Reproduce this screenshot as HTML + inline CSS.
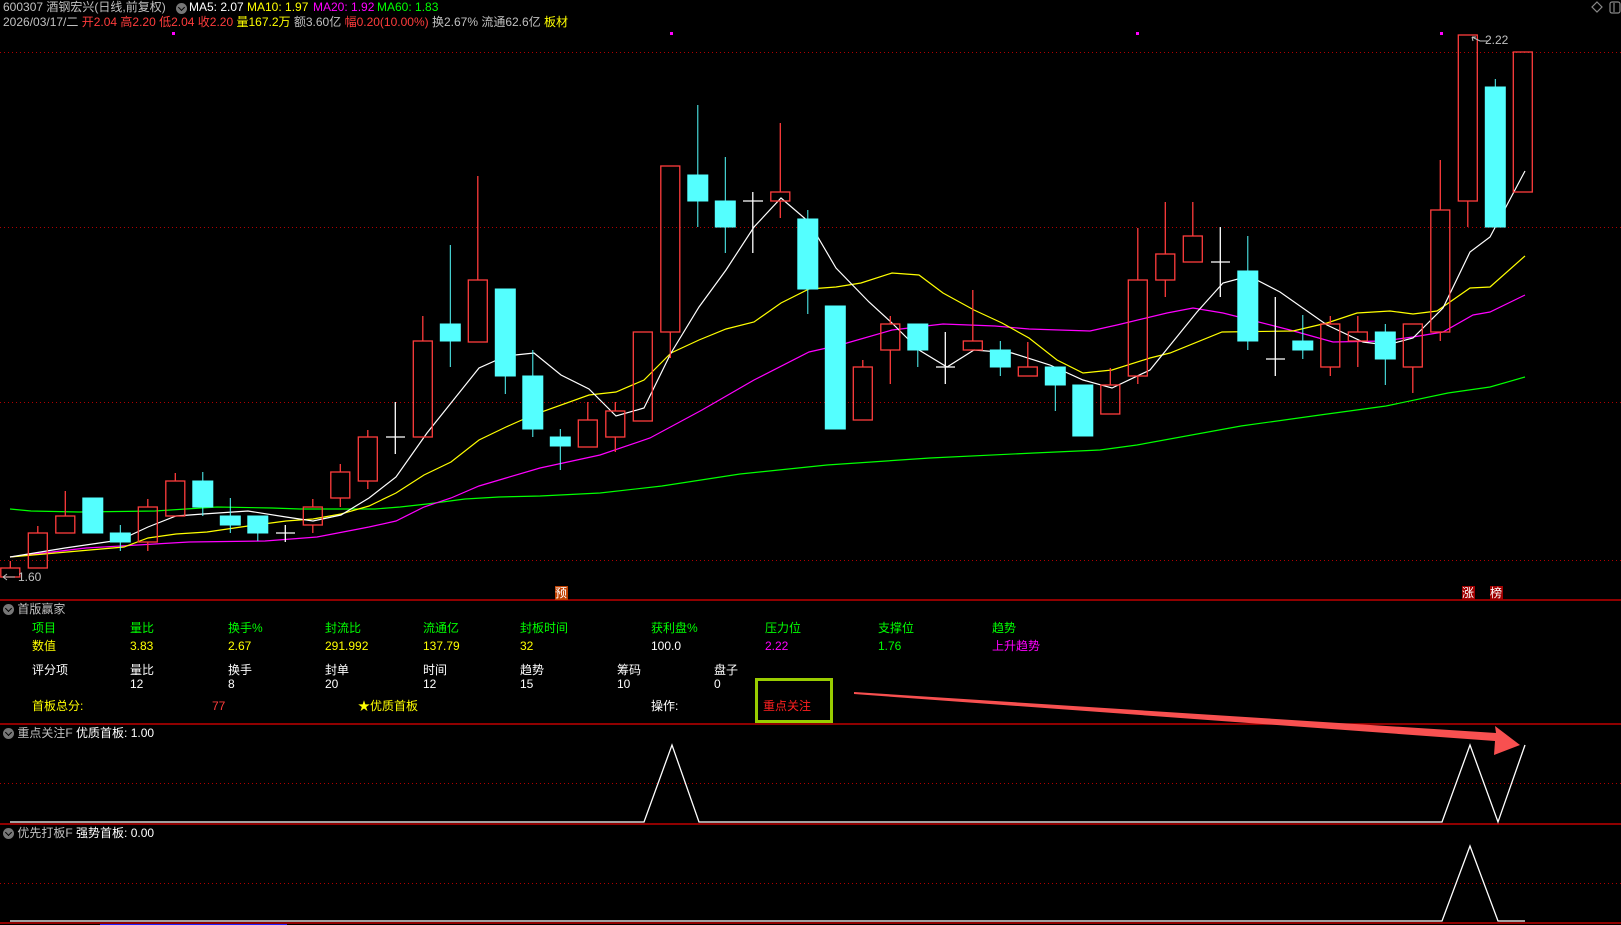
<!DOCTYPE html>
<html><head><meta charset="utf-8">
<style>
html,body{margin:0;padding:0;background:#000;width:1621px;height:925px;overflow:hidden}
body{position:relative;font-family:"Liberation Sans","Noto Sans CJK SC",sans-serif;font-size:12px;color:#c0c0c0}
.t{position:absolute;white-space:nowrap;line-height:14px}
svg{position:absolute;left:0;top:0}
.g{color:#00ff00}.y{color:#ffff00}.m{color:#ff00ff}.r{color:#ff3c3c}.w{color:#fff}.s{color:#c0c0c0}
.ic{display:inline-block;width:11px;height:11px;border-radius:50%;background:#777;vertical-align:-2px;position:relative}
.ic:after{content:"";position:absolute;left:3px;top:2px;width:4px;height:4px;border-right:1.5px solid #000;border-bottom:1.5px solid #000;transform:rotate(45deg)}
</style></head><body>
<svg width="1621" height="925" viewBox="0 0 1621 925">
<g stroke="#b00000" stroke-width="1" stroke-dasharray="1 3" fill="none">
<line x1="0" y1="52.5" x2="1621" y2="52.5"/><line x1="0" y1="227.5" x2="1621" y2="227.5"/>
<line x1="0" y1="402.5" x2="1621" y2="402.5"/><line x1="0" y1="560.5" x2="1621" y2="560.5"/>
<line x1="0" y1="783.5" x2="1621" y2="783.5"/><line x1="0" y1="883.5" x2="1621" y2="883.5"/>
</g>
<g stroke="#c00000" stroke-width="1.5">
<line x1="0" y1="600" x2="1621" y2="600"/><line x1="0" y1="724" x2="1621" y2="724"/>
<line x1="0" y1="824" x2="1621" y2="824"/><line x1="0" y1="923" x2="1621" y2="923"/>
</g>
<line x1="100" y1="924.5" x2="287" y2="924.5" stroke="#2020ff" stroke-width="1"/>
<!-- MAs -->
<g fill="none" stroke-width="1.2">
<polyline stroke="#00ff00" points="10,509 31,511 79,512 155,511 217,507 272,508 300,509 375,509 400,507 427,504 465,499 499,497 540,496 600,493 662,486 740,474 827,465 930,458 1034,453 1100,450 1137,445 1241,426 1320,415 1386,406 1448,393 1490,387 1525,377"/>
<polyline stroke="#ff00ff" points="10,557 86,548 189,542 265,541 317,537 369,527 396,521 424,507 451,498 479,486 506,478 540,468 600,455 650,438 702,410 754,380 809,352 840,345 892,330 943,324 995,326 1029,329 1090,331 1117,325 1167,313 1193,308 1223,313 1290,330 1333,342 1383,341 1413,337 1443,332 1473,315 1490,312 1525,295"/>
<polyline stroke="#ffff00" points="10,557 124,547 148,538 176,534 207,532 248,526 286,521 313,519 341,514 369,506 396,493 424,475 451,462 479,440 506,427 533,415 589,395 616,392 644,380 671,353 699,340 726,329 754,322 781,303 809,289 836,287 861,283 892,273 919,275 943,293 974,310 1002,323 1029,338 1057,360 1083,373 1112,370 1150,358 1170,353 1222,332 1293,331 1327,323 1357,313 1390,311 1413,314 1437,311 1470,288 1490,287 1525,256"/>
<polyline stroke="#ffffff" points="10,557 65,548 120,540 148,527 176,516 203,514 248,511 286,517 313,521 341,515 369,498 396,477 427,433 451,403 479,368 506,356 534,353 561,375 589,389 616,416 644,408 671,353 699,307 726,270 754,227 781,198 809,222 836,268 869,302 892,323 919,350 947,367 974,350 1012,353 1050,365 1083,380 1112,388 1150,370 1197,312 1223,283 1249,276 1280,292 1327,325 1363,342 1387,345 1413,338 1443,308 1470,252 1490,237 1525,171"/>
</g>
<g id="candles" stroke-width="1.3">
<!-- generated static -->
<g stroke="#ff3c3c" fill="none">
<line x1="10.3" y1="561" x2="10.3" y2="568"/><rect x="0.8" y="568" width="19" height="9"/>
<line x1="37.8" y1="526" x2="37.8" y2="533"/><rect x="28.3" y="533" width="19" height="35"/>
<line x1="65.3" y1="491" x2="65.3" y2="516"/><rect x="55.8" y="516" width="19" height="17"/>
<line x1="147.8" y1="499" x2="147.8" y2="507"/><line x1="147.8" y1="542" x2="147.8" y2="551"/><rect x="138.3" y="507" width="19" height="35"/>
<line x1="175.3" y1="473" x2="175.3" y2="481"/><rect x="165.8" y="481" width="19" height="35"/>
<line x1="312.8" y1="499" x2="312.8" y2="507"/><line x1="312.8" y1="525" x2="312.8" y2="533"/><rect x="303.3" y="507" width="19" height="18"/>
<line x1="340.3" y1="464" x2="340.3" y2="472"/><line x1="340.3" y1="498" x2="340.3" y2="507"/><rect x="330.8" y="472" width="19" height="26"/>
<line x1="367.8" y1="430" x2="367.8" y2="437"/><line x1="367.8" y1="481" x2="367.8" y2="489"/><rect x="358.3" y="437" width="19" height="44"/>
<line x1="422.8" y1="316" x2="422.8" y2="341"/><rect x="413.3" y="341" width="19" height="96"/>
<line x1="477.8" y1="176" x2="477.8" y2="280"/><rect x="468.3" y="280" width="19" height="62"/>
<line x1="587.8" y1="402" x2="587.8" y2="420"/><rect x="578.3" y="420" width="19" height="27"/>
<line x1="615.3" y1="402" x2="615.3" y2="411"/><line x1="615.3" y1="437" x2="615.3" y2="452"/><rect x="605.8" y="411" width="19" height="26"/>
<rect x="633.3" y="332" width="19" height="89"/>
<line x1="670.3" y1="332" x2="670.3" y2="358"/><rect x="660.8" y="166" width="19" height="166"/>
<line x1="780.3" y1="123" x2="780.3" y2="192"/><line x1="780.3" y1="201" x2="780.3" y2="218"/><rect x="770.8" y="192" width="19" height="9"/>
<line x1="862.8" y1="360" x2="862.8" y2="367"/><rect x="853.3" y="367" width="19" height="53"/>
<line x1="890.3" y1="316" x2="890.3" y2="324"/><line x1="890.3" y1="350" x2="890.3" y2="384"/><rect x="880.8" y="324" width="19" height="26"/>
<line x1="972.8" y1="290" x2="972.8" y2="341"/><rect x="963.3" y="341" width="19" height="9"/>
<line x1="1027.8" y1="342" x2="1027.8" y2="367"/><rect x="1018.3" y="367" width="19" height="9"/>
<line x1="1110.3" y1="368" x2="1110.3" y2="385"/><rect x="1100.8" y="385" width="19" height="29"/>
<line x1="1137.8" y1="228" x2="1137.8" y2="280"/><line x1="1137.8" y1="376" x2="1137.8" y2="384"/><rect x="1128.3" y="280" width="19" height="96"/>
<line x1="1165.3" y1="202" x2="1165.3" y2="254"/><line x1="1165.3" y1="280" x2="1165.3" y2="297"/><rect x="1155.8" y="254" width="19" height="26"/>
<line x1="1192.8" y1="202" x2="1192.8" y2="236"/><rect x="1183.3" y="236" width="19" height="26"/>
<line x1="1330.3" y1="316" x2="1330.3" y2="324"/><line x1="1330.3" y1="367" x2="1330.3" y2="376"/><rect x="1320.8" y="324" width="19" height="43"/>
<line x1="1357.8" y1="316" x2="1357.8" y2="332"/><line x1="1357.8" y1="341" x2="1357.8" y2="367"/><rect x="1348.3" y="332" width="19" height="9"/>
<line x1="1412.8" y1="367" x2="1412.8" y2="393"/><rect x="1403.3" y="324" width="19" height="43"/>
<line x1="1440.3" y1="160" x2="1440.3" y2="210"/><line x1="1440.3" y1="332" x2="1440.3" y2="341"/><rect x="1430.8" y="210" width="19" height="122"/>
<line x1="1467.8" y1="201" x2="1467.8" y2="227"/><rect x="1458.3" y="35" width="19" height="166"/>
<rect x="1513.3" y="52" width="19" height="140"/>
</g>
<g stroke="#54ffff" fill="#54ffff" stroke-width="1">
<rect x="82.8" y="498" width="20" height="35"/>
<line x1="120.3" y1="525" x2="120.3" y2="551"/><rect x="110.3" y="533" width="20" height="9"/>
<line x1="202.8" y1="472" x2="202.8" y2="516"/><rect x="192.8" y="481" width="20" height="26"/>
<line x1="230.3" y1="498" x2="230.3" y2="533"/><rect x="220.3" y="516" width="20" height="9"/>
<line x1="257.8" y1="516" x2="257.8" y2="541"/><rect x="247.8" y="516" width="20" height="17"/>
<line x1="450.3" y1="245" x2="450.3" y2="367"/><rect x="440.3" y="324" width="20" height="17"/>
<line x1="505.3" y1="289" x2="505.3" y2="394"/><rect x="495.3" y="289" width="20" height="87"/>
<line x1="532.8" y1="350" x2="532.8" y2="437"/><rect x="522.8" y="376" width="20" height="53"/>
<line x1="560.3" y1="429" x2="560.3" y2="470"/><rect x="550.3" y="437" width="20" height="9"/>
<line x1="697.8" y1="105" x2="697.8" y2="227"/><rect x="687.8" y="175" width="20" height="26"/>
<line x1="725.3" y1="157" x2="725.3" y2="253"/><rect x="715.3" y="201" width="20" height="26"/>
<line x1="807.8" y1="210" x2="807.8" y2="314"/><rect x="797.8" y="219" width="20" height="70"/>
<rect x="825.3" y="306" width="20" height="123"/>
<line x1="917.8" y1="324" x2="917.8" y2="367"/><rect x="907.8" y="324" width="20" height="26"/>
<line x1="1000.3" y1="341" x2="1000.3" y2="376"/><rect x="990.3" y="350" width="20" height="17"/>
<line x1="1055.3" y1="367" x2="1055.3" y2="411"/><rect x="1045.3" y="367" width="20" height="18"/>
<rect x="1072.8" y="385" width="20" height="51"/>
<line x1="1247.8" y1="236" x2="1247.8" y2="350"/><rect x="1237.8" y="271" width="20" height="70"/>
<line x1="1302.8" y1="315" x2="1302.8" y2="359"/><rect x="1292.8" y="341" width="20" height="9"/>
<line x1="1385.3" y1="324" x2="1385.3" y2="385"/><rect x="1375.3" y="332" width="20" height="27"/>
<line x1="1495.3" y1="79" x2="1495.3" y2="87"/><rect x="1485.3" y="87" width="20" height="140"/>
</g>
<g stroke="#ffffff" stroke-width="1.3">
<line x1="285.3" y1="525" x2="285.3" y2="542"/><line x1="276" y1="533" x2="295" y2="533"/>
<line x1="395.3" y1="402" x2="395.3" y2="454"/><line x1="386" y1="437" x2="405" y2="437"/>
<line x1="752.8" y1="192" x2="752.8" y2="253"/><line x1="743" y1="201" x2="763" y2="201"/>
<line x1="945.3" y1="332" x2="945.3" y2="384"/><line x1="936" y1="367" x2="955" y2="367"/>
<line x1="1220.3" y1="227" x2="1220.3" y2="297"/><line x1="1211" y1="262" x2="1230" y2="262"/>
<line x1="1275.3" y1="297" x2="1275.3" y2="376"/><line x1="1266" y1="359" x2="1285" y2="359"/>
</g>
</g>
<!-- magenta dots -->
<g fill="#ff00ff"><rect x="172" y="32" width="3" height="3"/><rect x="670" y="32" width="3" height="3"/><rect x="1136" y="32" width="3" height="3"/><rect x="1440" y="32" width="3" height="3"/></g>
<!-- arrows for price labels -->
<g stroke="#c0c0c0" fill="none" stroke-width="1"><path d="M3,577 h12 M3,577 l4,-3 M3,577 l4,3"/><path d="M1472,37 l8,4 h8 M1472,37 l1,4 M1472,37 l4,0"/></g>
<!-- top right icons -->
<g stroke="#888" fill="none" stroke-width="1.2"><path d="M1597,2 l5,5 l-5,5 l-5,-5z"/><rect x="1610" y="2" width="10" height="11" rx="2"/><line x1="1614" y1="3" x2="1614" y2="12"/></g>
<!-- labels boxes -->
<rect x="555" y="586" width="13" height="14" fill="#c04000"/>
<rect x="1462" y="586" width="13" height="14" fill="#a00000"/>
<rect x="1490" y="586" width="13" height="14" fill="#a00000"/>
<!-- green box -->
<rect x="756.5" y="679.5" width="75" height="42" fill="none" stroke="#99cc00" stroke-width="3"/>
<!-- sub panel lines -->
<polyline fill="none" stroke="#fff" stroke-width="1.3" points="10,822 644,822 672,745 699,822 1442,822 1470,745 1498,822 1525,745"/>
<polyline fill="none" stroke="#fff" stroke-width="1.3" points="10,921 1442,921 1470,846 1498,921 1525,921"/>
<!-- red arrow -->
<polygon fill="#f85050" points="854,692 1496,733 1495,726 1520,745 1494,755 1495,741 854,694"/>
</svg>

<div class="t" style="left:3px;top:0px"><span class="s">600307 酒钢宏兴(日线,前复权)</span></div>
<div class="t" style="left:176px;top:1px"><span class="ic"></span></div>
<div class="t w" style="left:189px;top:0px">MA5: 2.07</div>
<div class="t y" style="left:247px;top:0px">MA10: 1.97</div>
<div class="t m" style="left:313px;top:0px">MA20: 1.92</div>
<div class="t g" style="left:377px;top:0px">MA60: 1.83</div>
<div class="t" style="left:3px;top:15px"><span class="s">2026/03/17/二 </span><span class="r">开2.04 高2.20 低2.04 收2.20 </span><span class="y">量167.2万 </span><span class="s">额3.60亿 </span><span class="r">幅0.20(10.00%) </span><span class="s">换2.67% 流通62.6亿 </span><span class="y">板材</span></div>
<div class="t s" style="left:18px;top:570px">1.60</div>
<div class="t s" style="left:1485px;top:33px">2.22</div>
<div class="t" style="left:555px;top:586px;color:#fff">预</div>
<div class="t" style="left:1462px;top:586px;color:#fff">涨</div>
<div class="t" style="left:1490px;top:586px;color:#fff">榜</div>

<div class="t s" style="left:3px;top:602px"><span class="ic"></span> 首版赢家</div>
<div class="t g" style="left:32px;top:621px">项目</div>
<div class="t g" style="left:130px;top:621px">量比</div>
<div class="t g" style="left:228px;top:621px">换手%</div>
<div class="t g" style="left:325px;top:621px">封流比</div>
<div class="t g" style="left:423px;top:621px">流通亿</div>
<div class="t g" style="left:520px;top:621px">封板时间</div>
<div class="t g" style="left:651px;top:621px">获利盘%</div>
<div class="t g" style="left:765px;top:621px">压力位</div>
<div class="t g" style="left:878px;top:621px">支撑位</div>
<div class="t g" style="left:992px;top:621px">趋势</div>
<div class="t y" style="left:32px;top:639px">数值</div>
<div class="t y" style="left:130px;top:639px">3.83</div>
<div class="t y" style="left:228px;top:639px">2.67</div>
<div class="t y" style="left:325px;top:639px">291.992</div>
<div class="t y" style="left:423px;top:639px">137.79</div>
<div class="t y" style="left:520px;top:639px">32</div>
<div class="t w" style="left:651px;top:639px">100.0</div>
<div class="t m" style="left:765px;top:639px">2.22</div>
<div class="t g" style="left:878px;top:639px">1.76</div>
<div class="t m" style="left:992px;top:639px">上升趋势</div>
<div class="t w" style="left:32px;top:663px">评分项</div>
<div class="t w" style="left:130px;top:663px">量比<br>12</div>
<div class="t w" style="left:228px;top:663px">换手<br>8</div>
<div class="t w" style="left:325px;top:663px">封单<br>20</div>
<div class="t w" style="left:423px;top:663px">时间<br>12</div>
<div class="t w" style="left:520px;top:663px">趋势<br>15</div>
<div class="t w" style="left:617px;top:663px">筹码<br>10</div>
<div class="t w" style="left:714px;top:663px">盘子<br>0</div>
<div class="t y" style="left:32px;top:699px">首板总分:</div>
<div class="t r" style="left:212px;top:699px">77</div>
<div class="t y" style="left:358px;top:699px">★优质首板</div>
<div class="t w" style="left:651px;top:699px">操作:</div>
<div class="t" style="left:763px;top:699px;color:#ff2020">重点关注</div>

<div class="t" style="left:3px;top:726px"><span class="ic"></span> <span class="s">重点关注F</span> <span class="w">优质首板: 1.00</span></div>
<div class="t" style="left:3px;top:826px"><span class="ic"></span> <span class="s">优先打板F</span> <span class="w">强势首板: 0.00</span></div>
</body></html>
